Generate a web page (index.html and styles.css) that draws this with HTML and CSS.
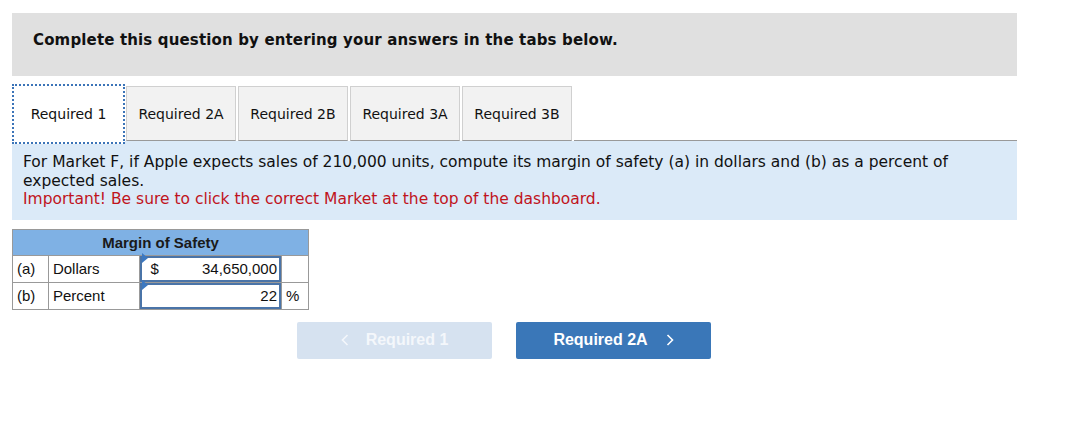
FILE: index.html
```html
<!DOCTYPE html>
<html lang="en">
<head>
  <meta charset="UTF-8">
  <title>Margin of Safety</title>
  <link rel="stylesheet" href="styles.css">
</head>
<body>
  <div class="page">
    <div class="banner">Complete this question by entering your answers in the tabs below.</div>

    <div class="tabs">
      <div class="tab active">Required 1</div>
      <div class="tab">Required 2A</div>
      <div class="tab">Required 2B</div>
      <div class="tab">Required 3A</div>
      <div class="tab">Required 3B</div>
      <div class="tab-rest"></div>
    </div>

    <div class="prompt">
      <p>For Market F, if Apple expects sales of 210,000 units, compute its margin of safety (a) in dollars and (b) as a percent of expected sales.</p>
      <p class="warn">Important! Be sure to click the correct Market at the top of the dashboard.</p>
    </div>

    <table class="grid">
      <tr>
        <th colspan="4">Margin of Safety</th>
      </tr>
      <tr>
        <td class="c-key">(a)</td>
        <td class="c-label">Dollars</td>
        <td class="c-input"><div class="field"><span>$</span><span>34,650,000</span></div></td>
        <td class="c-unit"></td>
      </tr>
      <tr>
        <td class="c-key">(b)</td>
        <td class="c-label">Percent</td>
        <td class="c-input"><div class="field"><span></span><span>22</span></div></td>
        <td class="c-unit">%</td>
      </tr>
    </table>

    <div class="nav">
      <div class="btn btn-prev">
        <svg class="chev" width="8" height="12" viewBox="0 0 8 12"><polyline points="6.5,1 1.5,6 6.5,11" fill="none" stroke="currentColor" stroke-width="1.6"/></svg>
        Required 1
      </div>
      <div class="btn btn-next">
        Required 2A
        <svg class="chev" width="8" height="12" viewBox="0 0 8 12"><polyline points="1.5,1 6.5,6 1.5,11" fill="none" stroke="currentColor" stroke-width="1.6"/></svg>
      </div>
    </div>
  </div>
</body>
</html>
```

FILE: styles.css
```css
body {
  margin: 0;
  background: #fff;
  color: #111;
  font-family: "DejaVu Sans", Verdana, sans-serif;
}

.page {
  width: 1005px;
  padding: 13px 0 0 12px;
}

.banner {
  height: 63px;
  box-sizing: border-box;
  padding: 17px 0 0 21px;
  background: #e0e0e0;
  font-size: 15px;
  font-weight: bold;
  letter-spacing: 0.15px;
  line-height: 20px;
}

.tabs {
  display: flex;
  align-items: flex-end;
  margin-top: 8px;
  height: 57px;
}

.tab {
  box-sizing: border-box;
  width: 110px;
  height: 55px;
  margin-right: 2px;
  border: 1px solid #d0d0d0;
  border-bottom: 1px solid #999;
  background: #f2f2f2;
  font-size: 14px;
  line-height: 55px;
  text-align: center;
  color: #111;
}

.tab.active {
  width: 113px;
  height: 60px;
  margin-right: 1px;
  margin-bottom: -3px;
  border: 2px dotted #3b74b8;
  background: #fff;
  line-height: 56px;
  position: relative;
  z-index: 1;
}

.tab-rest {
  flex: 1;
  border-bottom: 1px solid #999;
}

.prompt {
  background: #dbeaf8;
  padding: 12px 11px 11px;
  font-size: 15.5px;
  line-height: 18.5px;
}

.prompt p {
  margin: 0;
  padding-right: 40px;
}

.prompt .warn {
  color: #c0141c;
}

.grid {
  margin-top: 9px;
  border-collapse: collapse;
  font-family: "Liberation Sans", Arial, sans-serif;
  font-size: 15px;
  width: 297px;
}

.grid th {
  height: 25px;
  padding: 0;
  background: #7fb1e4;
  border: 1px solid #999;
  font-weight: bold;
  text-align: center;
  color: #1a1a1a;
}

.grid td {
  height: 26px;
  padding: 0 4px;
  border: 1px solid #999;
}

.c-key {
  width: 27px;
}

.c-label {
  width: 82px;
}

.c-input {
  width: 142px;
}

.grid td.c-input {
  padding: 0;
}

.c-unit {
  width: 18px;
}

.field {
  position: relative;
  display: flex;
  justify-content: space-between;
  box-sizing: border-box;
  height: 26px;
  padding: 2px 2px 0 9px;
  border: 2px solid #4a74a8;
}

.field::before {
  content: "";
  position: absolute;
  left: 0;
  top: 0;
  border-top: 5px solid transparent;
  border-bottom: 5px solid transparent;
  border-left: 6px solid #3c78c0;
  transform: translateY(-5px);
}

.nav {
  display: flex;
  gap: 24px;
  margin: 12px 0 0 285px;
}

.btn {
  display: flex;
  align-items: center;
  justify-content: center;
  width: 195px;
  height: 37px;
  border-radius: 2px;
  font-family: "Liberation Sans", Arial, sans-serif;
  font-size: 16px;
  font-weight: bold;
  color: #fff;
}

.btn-prev {
  background: #d6e2f0;
  color: #f4f7fb;
}

.btn-next {
  background: #3a77b8;
}

.btn-prev .chev {
  margin-right: 17px;
}

.btn-next .chev {
  margin-left: 18px;
}
```
